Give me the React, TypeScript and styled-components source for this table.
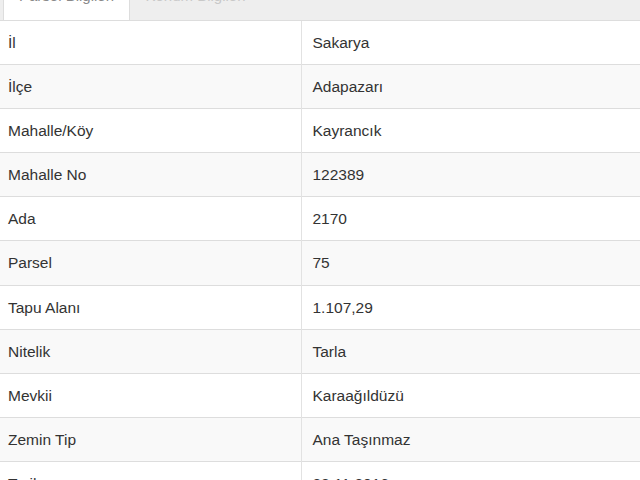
import React from "react";
import styled, { createGlobalStyle } from "styled-components";

const Global = createGlobalStyle`
  html, body { margin: 0; padding: 0; background: #ffffff; }
  body { font-family: "Liberation Sans", Arial, sans-serif; }
`;

const Page = styled.div`
  width: 640px;
  height: 480px;
  overflow: hidden;
  background: #ffffff;
`;

const TabNav = styled.ul`
  list-style: none;
  margin: -25px 0 0 0;
  padding: 0 0 0 3px;
  display: flex;
  background: #eeeeee;
  height: 45px;
  box-sizing: border-box;
`;

const Tab = styled.li<{ $active?: boolean; $w: number }>`
  width: ${(p) => p.$w}px;
  box-sizing: border-box;
  height: 45px;
  text-align: center;
  font-size: 15px;
  line-height: 20px;
  padding-top: 11px;
  color: ${(p) => (p.$active ? "#8a8a8a" : "#c8c8c8")};
  background: ${(p) => (p.$active ? "#ffffff" : "transparent")};
  border-left: 1px solid ${(p) => (p.$active ? "#dddddd" : "transparent")};
  border-right: 1px solid ${(p) => (p.$active ? "#dddddd" : "transparent")};
  white-space: nowrap;
`;

const Table = styled.table`
  width: 100%;
  border-collapse: collapse;
  table-layout: fixed;
  font-size: 15.5px;
  color: #333333;
`;

const Row = styled.tr<{ $striped: boolean }>`
  background: ${(p) => (p.$striped ? "#f9f9f9" : "#ffffff")};
`;

const LabelCell = styled.td`
  width: 301px;
  box-sizing: border-box;
  padding: 11px 8px 11px 8px;
  line-height: 21.1px;
  vertical-align: middle;
  border-top: 1px solid #dddddd;
`;

const ValueCell = styled.td`
  padding: 11px 11px 11px 11px;
  line-height: 21.1px;
  border-top: 1px solid #dddddd;
  border-left: 1px solid #e2e2e2;
  vertical-align: middle;
  white-space: nowrap;
`;

const rows: [string, string][] = [
  ["İl", "Sakarya"],
  ["İlçe", "Adapazarı"],
  ["Mahalle/Köy", "Kayrancık"],
  ["Mahalle No", "122389"],
  ["Ada", "2170"],
  ["Parsel", "75"],
  ["Tapu Alanı", "1.107,29"],
  ["Nitelik", "Tarla"],
  ["Mevkii", "Karaağıldüzü"],
  ["Zemin Tip", "Ana Taşınmaz"],
  ["Tarih", "23.11.2016"],
];

export default function App() {
  return (
    <Page>
      <Global />
      <TabNav>
        <Tab $active $w={127}>Parsel Bilgileri</Tab>
        <Tab $w={131}>Konum Bilgileri</Tab>
      </TabNav>
      <Table>
        <tbody>
          {rows.map(([k, v], i) => (
            <Row key={k} $striped={i % 2 === 1}>
              <LabelCell>{k}</LabelCell>
              <ValueCell>{v}</ValueCell>
            </Row>
          ))}
        </tbody>
      </Table>
    </Page>
  );
}
